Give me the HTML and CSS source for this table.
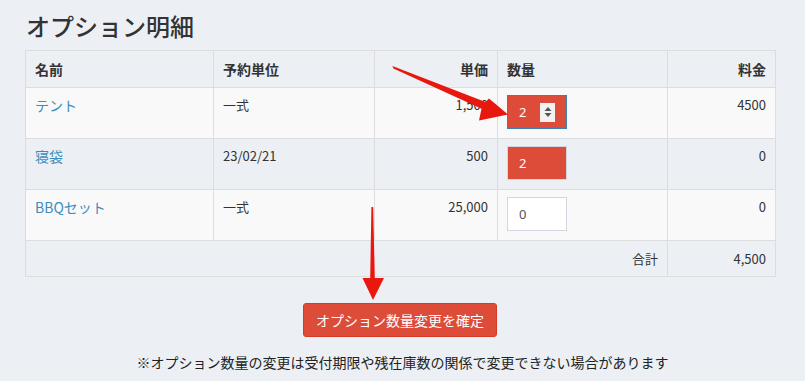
FILE: index.html
```html
<!DOCTYPE html>
<html lang="ja">
<head>
<meta charset="utf-8">
<link rel="stylesheet" href="styles.css">
</head>
<body>
<div class="page">
  <h1 class="title">オプション明細</h1>
  <table class="opt-table">
    <colgroup>
      <col class="c-name"><col class="c-unit"><col class="c-price"><col class="c-qty"><col class="c-fee">
    </colgroup>
    <thead>
      <tr>
        <th>名前</th>
        <th>予約単位</th>
        <th class="r">単価</th>
        <th>数量</th>
        <th class="r">料金</th>
      </tr>
    </thead>
    <tbody>
      <tr class="odd">
        <td><a class="link">テント</a></td>
        <td>一式</td>
        <td class="r">1,500</td>
        <td><div class="qty qty-red qty-focus"><span>2</span><span class="spin"><svg width="10" height="14" viewBox="0 0 10 14"><path d="M5 2 L8.5 6 L1.5 6 Z M5 12 L8.5 8 L1.5 8 Z" fill="#555"/></svg></span></div></td>
        <td class="r">4500</td>
      </tr>
      <tr>
        <td><a class="link">寝袋</a></td>
        <td>23/02/21</td>
        <td class="r">500</td>
        <td><div class="qty qty-red"><span>2</span></div></td>
        <td class="r">0</td>
      </tr>
      <tr class="odd">
        <td><a class="link">BBQセット</a></td>
        <td>一式</td>
        <td class="r">25,000</td>
        <td><div class="qty"><span>0</span></div></td>
        <td class="r">0</td>
      </tr>
      <tr class="foot">
        <td colspan="4" class="r">合計</td>
        <td class="r">4,500</td>
      </tr>
    </tbody>
  </table>
  <div class="actions">
    <button class="btn">オプション数量変更を確定</button>
  </div>
  <p class="note">※オプション数量の変更は受付期限や残在庫数の関係で変更できない場合があります</p>
</div>
<svg class="arrows" width="805" height="381" viewBox="0 0 805 381">
  <polygon fill="#e8180f" points="392.4,66 485.5,102 489,98.5 508,114.5 479,120.5 481.5,108.8 393.4,68.6"/>
  <polygon fill="#e8180f" points="371.4,207 373.2,207 374.8,278 384,278 373,300 362.5,278 370.2,278"/>
</svg>
</body>
</html>
```

FILE: styles.css
```css
html, body {
  margin: 0;
  padding: 0;
}
body {
  background: #ecf0f5;
  font-family: "Noto Sans CJK JP", "Noto Sans", sans-serif;
  color: #333;
  width: 805px;
  height: 381px;
  overflow: hidden;
  position: relative;
}
.page {
  padding: 0 30px 0 25px;
}
.title {
  margin: 11px 0 10px 1px;
  font-size: 24px;
  line-height: 29px;
  font-weight: 500;
  color: #333;
}
.opt-table {
  width: 750px;
  table-layout: fixed;
  border-collapse: collapse;
  border: 1px solid #ddd;
  font-size: 13px;
}
.c-name { width: 188px; }
.c-unit { width: 161px; }
.c-price { width: 123px; }
.c-qty { width: 170px; }
.c-fee { width: 108px; }
.opt-table th,
.opt-table td {
  border: 1px solid #ddd;
  padding: 7px 9px 9px 9px;
  text-align: left;
  vertical-align: top;
  line-height: 20px;
}
.opt-table th {
  font-size: 14px;
  font-weight: 700;
  padding-top: 8px;
  padding-bottom: 8px;
  line-height: 20px;
}
.opt-table .r {
  text-align: right;
}
.opt-table tr.odd td {
  background: #f9f9f9;
}
.opt-table td {
  height: 34px;
}
.opt-table tr.foot td {
  height: 20px;
  padding-top: 8px;
  padding-bottom: 7px;
}
.link {
  color: #3c8dbc;
  font-size: 14px;
}
.qty {
  box-sizing: border-box;
  width: 60px;
  height: 34px;
  border: 1px solid #d2d6de;
  background: #fff;
  color: #555;
  font-size: 13px;
  display: flex;
  align-items: center;
  justify-content: space-between;
  padding: 0 11px 0 11px;
  margin-top: 0;
  font-family: "Noto Sans", sans-serif;
}
.qty-red {
  background: #dd4b39;
  color: #fff;
}
.qty-focus {
  border-color: #3c7fb1;
}
.spin {
  width: 15px;
  height: 19px;
  background: #f2f2f2;
  display: flex;
  align-items: center;
  justify-content: center;
}
.spin svg { display: block; }
.actions {
  display: flex;
  justify-content: center;
  padding-top: 26px;
}
.btn {
  background: #dd4b39;
  border: 1px solid #d73925;
  border-radius: 3px;
  color: #fff;
  font-family: "Noto Sans CJK JP", sans-serif;
  font-size: 14px;
  line-height: 20px;
  height: 34px;
  padding: 0 12px;
  white-space: nowrap;
  width: 194px;
}
.note {
  margin: 15px -30px 0 -25px;
  text-align: center;
  font-size: 14px;
  line-height: 20px;
  color: #222;
}
.arrows {
  position: absolute;
  left: 0;
  top: 0;
  pointer-events: none;
}
```
